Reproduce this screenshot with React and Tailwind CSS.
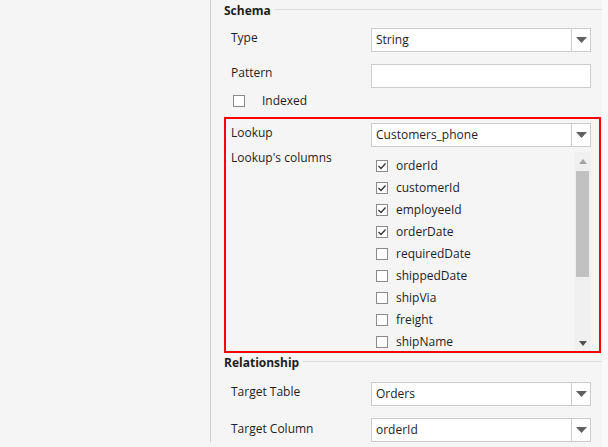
import React from "react";

const font = { fontFamily: '"Segoe UI", "Open Sans", "Noto Sans", sans-serif' };

function Arrow({ color = "#606060" }) {
  return (
    <svg width="11" height="6" viewBox="0 0 11 6">
      <path d="M0 0 H11 L5.5 6 Z" fill={color} />
    </svg>
  );
}

function Select({ value }) {
  return (
    <div className="flex h-[24px] w-[220px] border border-[#cccccc] bg-white">
      <div className="flex-1 pl-[4px] leading-[22px] text-[#1e1e1e]">{value}</div>
      <div className="flex w-[19px] items-center justify-center border-l border-[#cccccc]">
        <Arrow />
      </div>
    </div>
  );
}

function Box({ checked }) {
  return (
    <div className="flex h-[12px] w-[12px] items-center justify-center border border-[#8a8a8a] bg-white">
      {checked && (
        <svg width="10" height="10" viewBox="0 0 10 10">
          <path d="M1.5 5 L4 7.5 L8.5 2.5" fill="none" stroke="#333" strokeWidth="1.3" />
        </svg>
      )}
    </div>
  );
}

function Header({ title }) {
  return (
    <div className="flex h-[16px] items-start">
      <span className="ml-[13px] font-bold leading-[18px] text-[#1e1e1e]">{title}</span>
      <div className="mt-[7px] ml-[4px] h-px flex-1 bg-[#dcdcdc]" />
    </div>
  );
}

const cols = [
  ["orderId", true],
  ["customerId", true],
  ["employeeId", true],
  ["orderDate", true],
  ["requiredDate", false],
  ["shippedDate", false],
  ["shipVia", false],
  ["freight", false],
  ["shipName", false],
];

export default function App() {
  return (
    <div className="flex h-[447px] w-[608px] overflow-hidden bg-[#f5f5f5] text-[12px] text-[#1e1e1e]" style={font}>
      <div className="w-[210px] shrink-0" />
      <div className="h-[442px] w-px shrink-0 bg-[#cfcfcf]" />
      <div className="flex w-[391px] shrink-0 flex-col">
        <div className="mt-[2px]">
          <Header title="Schema" />
        </div>
        <div className="mt-[10px] flex">
          <div className="w-[160px] pl-[20px] pt-[2px] leading-[16px]">Type</div>
          <Select value="String" />
        </div>
        <div className="mt-[12px] flex">
          <div className="w-[160px] pl-[20px] pt-[1px] leading-[16px]">Pattern</div>
          <div className="h-[24px] w-[220px] border border-[#cccccc] bg-white" />
        </div>
        <div className="mt-[7px] flex h-[12px] items-center pl-[22px]">
          <Box checked={false} />
          <span className="ml-[17px] leading-[14px]">Indexed</span>
        </div>
        <div className="mt-[10px] ml-[13px] h-[236px] w-[377px] border-2 border-[#ff0000]">
          <div className="mt-[4px] flex">
            <div className="w-[145px] pl-[5px] pt-[2px] leading-[16px]">Lookup</div>
            <Select value="Customers_phone" />
          </div>
          <div className="flex">
            <div className="w-[145px] pl-[5px] pt-[3px] leading-[16px]">Lookup's columns</div>
            <div className="mt-[5px] flex h-[199px] w-[220px]">
              <div className="flex-1 pt-[3px]">
                {cols.map(([name, c]) => (
                  <div key={name} className="flex h-[22px] items-center pl-[5px]">
                    <Box checked={c} />
                    <span className="ml-[8px] leading-[14px] text-[#1e1e1e]">{name}</span>
                  </div>
                ))}
              </div>
              <div className="flex w-[17px] flex-col items-center bg-[#f0f0f0]">
                <div className="flex h-[19px] items-center justify-center">
                  <svg width="8" height="5" viewBox="0 0 8 5">
                    <path d="M0 5 H8 L4 0 Z" fill="#a3a3a3" />
                  </svg>
                </div>
                <div className="h-[106px] w-[13px] bg-[#c1c1c1]" />
                <div className="flex-1" />
                <div className="flex h-[15px] items-center justify-center">
                  <svg width="8" height="5" viewBox="0 0 8 5">
                    <path d="M0 0 H8 L4 5 Z" fill="#505050" />
                  </svg>
                </div>
              </div>
            </div>
          </div>
        </div>
        <div className="mt-[1px]">
          <Header title="Relationship" />
        </div>
        <div className="mt-[12px] flex">
          <div className="w-[160px] pl-[20px] pt-[2px] leading-[16px]">Target Table</div>
          <Select value="Orders" />
        </div>
        <div className="mt-[12px] flex">
          <div className="w-[160px] pl-[20px] pt-[3px] leading-[16px]">Target Column</div>
          <Select value="orderId" />
        </div>
      </div>
      <div className="flex-1 bg-[#f9f9f9]" />
    </div>
  );
}
